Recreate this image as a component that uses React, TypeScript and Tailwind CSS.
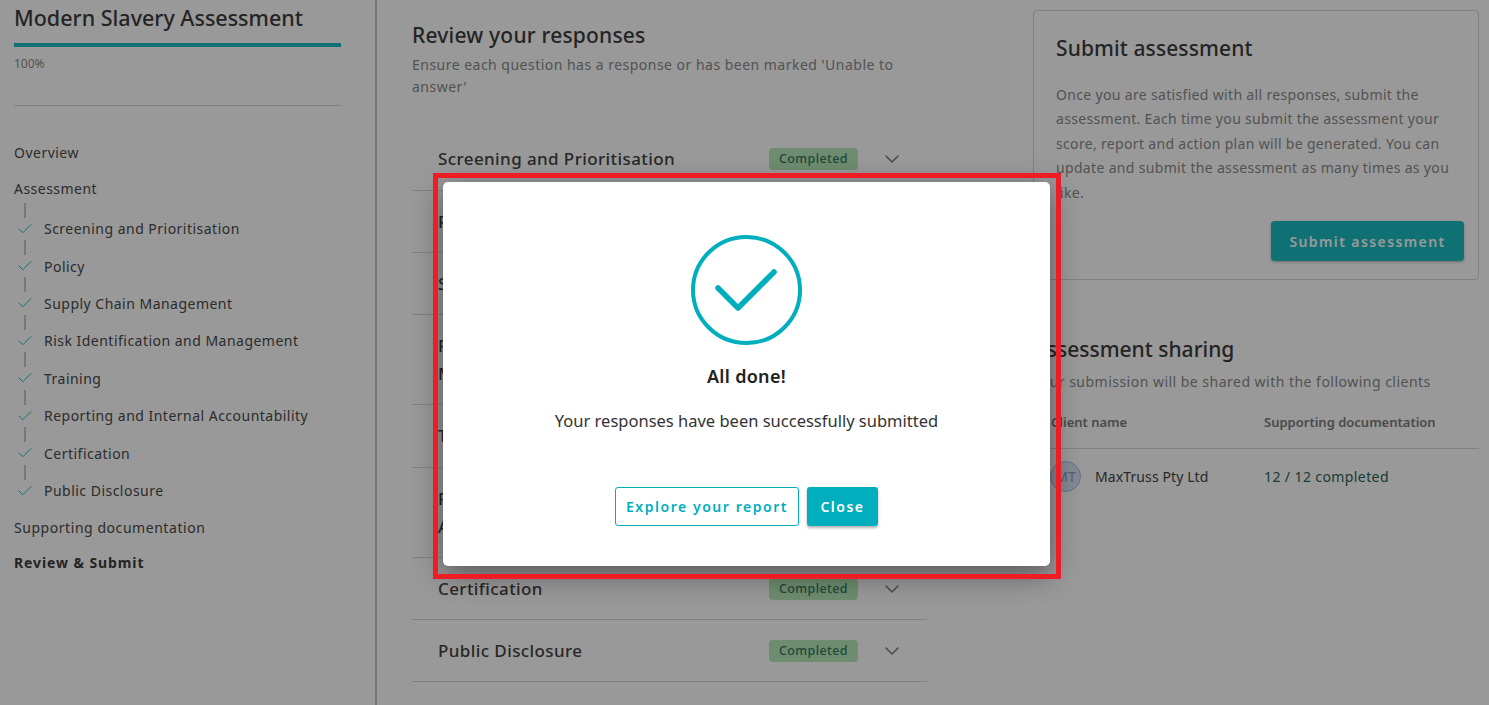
import { Check, ChevronDown } from "lucide-react";

const steps = [
  "Screening and Prioritisation",
  "Policy",
  "Supply Chain Management",
  "Risk Identification and Management",
  "Training",
  "Reporting and Internal Accountability",
  "Certification",
  "Public Disclosure",
];

function Sidebar() {
  return (
    <aside className="w-[377px] shrink-0 border-r-2 border-[#c4c4c4] pl-[14px] pr-[34px]">
      <h1 className="mt-[3px] text-[21.5px] leading-[30px] font-medium text-[#3c3c3c]">Modern Slavery Assessment</h1>
      <div className="mt-[10px] h-1 bg-[#1abcc0]" />
      <p className="mt-[9px] text-[12px] leading-[16px] text-[#8a8a8a]">100%</p>
      <div className="mt-[33px] h-px bg-[#d8d8d8]" />
      <nav className="mt-[37px] text-[14px] tracking-[0.48px] text-[#4a4a4a]">
        <p className="h-[20px] leading-[20px]">Overview</p>
        <p className="mt-[16px] h-[20px] leading-[20px]">Assessment</p>
        <ul className="mt-[3.6px]">
          {steps.map((step) => (
            <li key={step} className="h-[37.43px]">
              <div className="ml-[10px] h-[15px] w-[2px] bg-[#c8c8c8]" />
              <div className="mt-px flex h-[20px] items-center">
                <Check className="ml-[2px] h-[18px] w-[18px] text-[#1abcc0]" strokeWidth={1.3} />
                <span className="ml-[10px] whitespace-nowrap">{step}</span>
              </div>
            </li>
          ))}
        </ul>
        <p className="mt-[16px] h-[20px] leading-[20px] tracking-[0.55px]">Supporting documentation</p>
        <p className="mt-[15px] h-[20px] leading-[20px] font-bold tracking-[0.9px] text-[#3c3c3c]">Review &amp; Submit</p>
      </nav>
    </aside>
  );
}

function ReviewRow({ title, height }: { title: string; height: string }) {
  return (
    <div className={`flex items-start border-b border-[#d8d8d8] pl-[26px] ${height}`}>
      <p className="mt-[17px] w-[331px] pr-[50px] text-[17px] leading-[27.5px] font-medium tracking-[0.4px] text-[#444]">
        {title}
      </p>
      <span className="mt-[20px] flex h-[22px] w-[89px] items-center justify-center rounded bg-[#b8eab9] text-[12.5px] font-medium tracking-[0.4px] text-[#317a63]">
        Completed
      </span>
      <ChevronDown className="ml-[22px] mt-[19px] h-[24px] w-[24px] text-[#7c7c7c]" strokeWidth={1.5} />
    </div>
  );
}

function ReviewColumn() {
  return (
    <section className="ml-[35px] w-[515px] shrink-0">
      <h2 className="mt-[19px] text-[21px] leading-[32px] font-medium tracking-[0.2px] text-[#3c3c3c]">
        Review your responses
      </h2>
      <p className="mt-[3px] w-[490px] text-[14px] leading-[22px] tracking-[0.48px] text-[#8a8a8a]">
        Ensure each question has a response or has been marked 'Unable to answer'
      </p>
      <div className="mt-[30px]">
        <ReviewRow title="Screening and Prioritisation" height="h-[63px]" />
        <ReviewRow title="Policy" height="h-[62px]" />
        <ReviewRow title="Supply Chain Management" height="h-[62px]" />
        <ReviewRow title="Risk Identification and Management" height="h-[90px]" />
        <ReviewRow title="Training" height="h-[63px]" />
        <ReviewRow title="Reporting and Internal Accountability" height="h-[90px]" />
        <ReviewRow title="Certification" height="h-[62px]" />
        <ReviewRow title="Public Disclosure" height="h-[62px]" />
      </div>
    </section>
  );
}

function SideColumn() {
  return (
    <section className="ml-[106px] mr-[10px] flex-1">
      <div className="mt-[10px] h-[270px] rounded border border-[#d8d8d8] px-[22px] pt-[21px]">
        <h2 className="text-[21px] leading-[32px] font-medium tracking-[0.1px] text-[#3c3c3c]">Submit assessment</h2>
        <p className="mt-[19px] text-[14px] leading-[24.4px] tracking-[0.33px] text-[#8a8a8a]">
          Once you are satisfied with all responses, submit the assessment. Each time you submit the assessment your
          score, report and action plan will be generated. You can update and submit the assessment as many times as you
          like.
        </p>
        <div className="mt-[16px] flex justify-end">
          <button className="-mr-[8px] h-[40px] w-[193px] rounded bg-[#19bcc1] text-[14px] font-semibold tracking-[1.4px] text-white shadow-[0_1px_3px_rgba(0,0,0,0.3)]">
            Submit assessment
          </button>
        </div>
      </div>
      <h2 className="mt-[53px] text-[21px] leading-[32px] font-medium text-[#3c3c3c]">Assessment sharing</h2>
      <p className="mt-[6px] text-[14px] leading-[22px] tracking-[0.48px] text-[#8a8a8a]">
        Your submission will be shared with the following clients
      </p>
      <div className="mt-[21px] flex h-[35px] border-b border-[#d8d8d8] pl-[18px] text-[13px] leading-[16px] font-semibold text-[#7c7c7c]">
        <span className="w-[213px]">Client name</span>
        <span>Supporting documentation</span>
      </div>
      <div className="mt-[12px] flex items-center pl-[17px] text-[14px]">
        <span className="flex h-[31px] w-[31px] items-center justify-center rounded-full border border-[#a9bbe6] bg-[#dde3f5] text-[14px] text-[#8e9ccc]">
          MT
        </span>
        <span className="ml-[14px] w-[169px] tracking-[0.1px] text-[#444]">MaxTruss Pty Ltd</span>
        <span className="tracking-[0.4px] text-[#2a6358]">12 / 12 completed</span>
      </div>
    </section>
  );
}

function DoneModal() {
  return (
    <div className="absolute left-[443px] top-[182px] flex h-[384px] w-[607px] flex-col items-center rounded-[5px] bg-white shadow-[0_8px_30px_rgba(0,0,0,0.45)]">
      <svg className="mt-[53px]" width="111" height="110" viewBox="0 0 111 110" fill="none">
        <ellipse cx="55.5" cy="55" rx="53.5" ry="53" stroke="#00aebd" strokeWidth="4" />
        <path d="M27 53 L47 73 L83 37" stroke="#00aebd" strokeWidth="5.5" strokeLinecap="round" strokeLinejoin="round" />
      </svg>
      <p className="mt-[18px] text-[18px] leading-[26px] font-semibold tracking-[0.3px] text-[#222]">All done!</p>
      <p className="mt-[19px] text-[16.5px] leading-[26px] text-[#333]">Your responses have been successfully submitted</p>
      <div className="mt-[53px] flex gap-2">
        <button className="h-[39px] w-[184px] rounded-[3px] border border-[#00aebd] text-[14px] font-semibold tracking-[1.55px] text-[#00aebd]">
          Explore your report
        </button>
        <button className="h-[39px] w-[71px] rounded-[3px] bg-[#00aebd] text-[14px] font-semibold tracking-[1.5px] text-white shadow-[0_2px_3px_rgba(0,0,0,0.3)]">
          Close
        </button>
      </div>
    </div>
  );
}

export default function App() {
  return (
    <div className="relative h-[705px] w-[1489px] overflow-hidden bg-white font-['Noto_Sans',sans-serif]">
      <div className="flex h-full">
        <Sidebar />
        <ReviewColumn />
        <SideColumn />
      </div>
      {/* dimmed backdrop behind the dialog */}
      <div className="absolute inset-0 bg-black/40" />
      <DoneModal />
      {/* red highlight frame round the dialog */}
      <div className="absolute left-[433px] top-[173px] h-[406px] w-[628px] border-[5px] border-[#ee1c25]" />
    </div>
  );
}
